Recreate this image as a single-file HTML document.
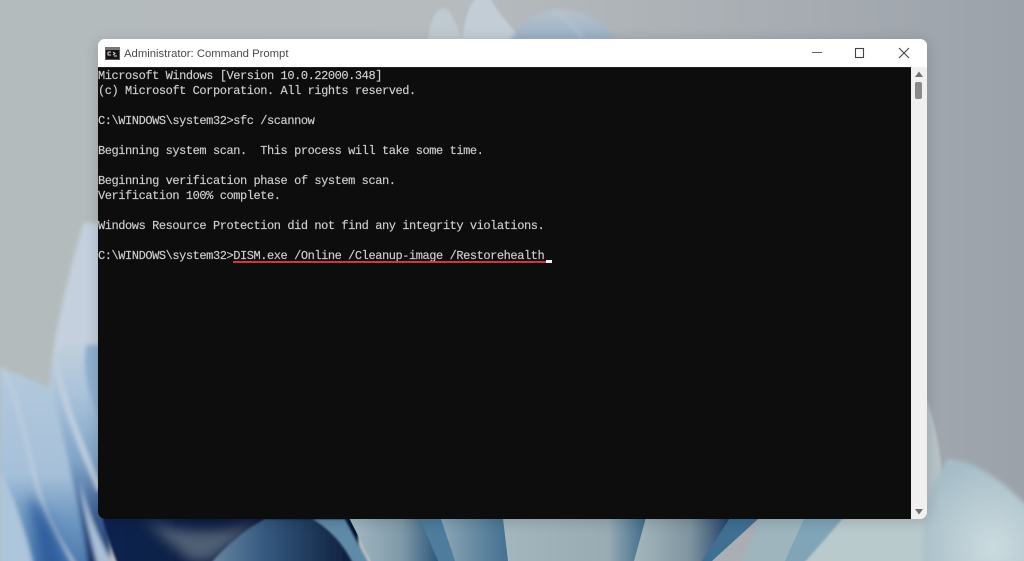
<!DOCTYPE html>
<html lang="en">
<head>
<meta charset="utf-8">
<title>Administrator: Command Prompt</title>
<style>
html,body{margin:0;padding:0;width:1024px;height:561px;overflow:hidden;background:#aeb4b8}
#bg{position:absolute;left:0;top:0}
#win{position:absolute;left:98px;top:39px;width:829px;height:480px;background:#f0f0f0;border-radius:7px;overflow:hidden;box-shadow:0 2px 14px rgba(0,0,0,.16)}
#title{position:absolute;left:0;top:0;width:829px;height:28px;background:#fff}
#ttext{position:absolute;left:26px;top:7.5px;font:11.3px/15px "Liberation Sans",sans-serif;color:#4a4a4a;white-space:nowrap}
#term{position:absolute;left:0;top:28px;width:813px;height:452px;background:#0d0d0d;border-top:1px solid #222;box-sizing:border-box}
#term pre{margin:0;position:absolute;left:0;top:1px;font:12px/15px "Liberation Mono",monospace;letter-spacing:-.44px;color:#cfcfcf;white-space:pre;-webkit-text-stroke:.15px #cfcfcf}
#ul{position:absolute;left:135px;top:193px;width:313px;height:2px;background:#d8323a}
#cur{position:absolute;left:448px;top:192px;width:6px;height:3px;background:#eee}
#sb{position:absolute;left:813px;top:28px;width:16px;height:452px;background:#f0f0f0}
#thumb{position:absolute;left:4px;top:15px;width:7px;height:17px;background:#8a8a8a;border-radius:2px}
</style>
</head>
<body>
<svg id="bg" width="1024" height="561" viewBox="0 0 1024 561" xmlns="http://www.w3.org/2000/svg">
<defs>
<linearGradient id="sky" x1="0" y1="0" x2="1" y2="0"><stop offset="0" stop-color="#b4bbbc"/><stop offset=".45" stop-color="#b6bbbe"/><stop offset="1" stop-color="#9ca2aa"/></linearGradient>
<linearGradient id="lb" x1="0" y1="0" x2="0" y2="1"><stop offset="0" stop-color="#b3c9dc"/><stop offset=".5" stop-color="#a6c0d9"/><stop offset=".7" stop-color="#7099c2"/><stop offset="1" stop-color="#4171aa"/></linearGradient>
<linearGradient id="lb2" gradientUnits="userSpaceOnUse" x1="0" y1="340" x2="0" y2="561"><stop offset="0" stop-color="#c4d0dd"/><stop offset=".25" stop-color="#a9c2da"/><stop offset=".55" stop-color="#7fa3c8"/><stop offset=".8" stop-color="#3a5f94"/><stop offset="1" stop-color="#1c3568"/></linearGradient>
<linearGradient id="d1" x1="0" y1="0" x2="1" y2="0"><stop offset="0" stop-color="#0f2550"/><stop offset="1" stop-color="#06122c"/></linearGradient>
<linearGradient id="st" x1="0" y1="0" x2="1" y2="0"><stop offset="0" stop-color="#6f8ba6"/><stop offset=".4" stop-color="#35597f"/><stop offset="1" stop-color="#0b1b3a"/></linearGradient>
<linearGradient id="b1" x1="0" y1="0" x2="1" y2="0"><stop offset="0" stop-color="#a6bcc6"/><stop offset=".6" stop-color="#7f99a8"/><stop offset="1" stop-color="#2b5478"/></linearGradient>
<linearGradient id="b2" x1="0" y1="0" x2="1" y2="0"><stop offset="0" stop-color="#8fa9b7"/><stop offset="1" stop-color="#426f90"/></linearGradient>
<linearGradient id="b3" x1="0" y1="0" x2="1" y2="0"><stop offset="0" stop-color="#a3b6bd"/><stop offset=".72" stop-color="#98abb3"/><stop offset="1" stop-color="#356488"/></linearGradient>
<linearGradient id="b4" x1="0" y1="0" x2="1" y2="0"><stop offset="0" stop-color="#a5b7bd"/><stop offset=".55" stop-color="#7d939f"/><stop offset="1" stop-color="#0e2f5c"/></linearGradient>
<radialGradient id="tb" cx=".6" cy=".7" r=".7"><stop offset="0" stop-color="#cbdbdf"/><stop offset="1" stop-color="#a6bdc8"/></radialGradient>
<linearGradient id="dome" x1="0" y1="0" x2="0" y2="1"><stop offset="0" stop-color="#b7c3cb"/><stop offset="1" stop-color="#97aec8"/></linearGradient>
<filter id="s1" x="-20%" y="-20%" width="140%" height="140%"><feGaussianBlur stdDeviation="1"/></filter>
<filter id="s2" x="-20%" y="-20%" width="140%" height="140%"><feGaussianBlur stdDeviation="2"/></filter>
<filter id="s6" x="-30%" y="-30%" width="160%" height="160%"><feGaussianBlur stdDeviation="6"/></filter>
</defs>
<rect width="1024" height="561" fill="url(#sky)"/>
<path d="M427 42 C430 25 434 8 444 8 C449 8 452 16 456 24 L464 42Z" fill="#bfc9d0" filter="url(#s1)"/>
<path d="M462 42 C464 20 470 0 478 -2 L490 -2 C498 12 512 30 526 42Z" fill="#c2cdd5" filter="url(#s1)"/>
<path d="M510 42 C520 18 545 8 565 10 C590 12 608 28 618 42Z" fill="url(#dome)" filter="url(#s2)"/>
<path d="M584 42 C575 25 565 16 552 11" stroke="#b5c6d2" stroke-width="2" fill="none" filter="url(#s2)"/>

<!-- left petals -->
<g filter="url(#s2)">
<path d="M50 380 C54 330 72 260 84 222 L110 226 L110 400 L50 400Z" fill="#c4d0dd"/>
<path d="M0 368 C20 375 45 385 58 392 C70 430 90 500 115 580 L0 580Z" fill="url(#lb)"/>
<path d="M50 375 C54 355 60 345 66 335 L110 335 L110 580 L90 580 C80 500 62 440 50 375Z" fill="url(#lb2)"/>
<path d="M86 345 C82 370 88 395 100 420 L110 420 L110 345Z" fill="#8fb0d0"/>
<path d="M56 360 C60 390 74 430 100 490" stroke="#bfcedd" stroke-width="6" fill="none"/>
<path d="M2 368 C14 385 22 425 32 465 C40 505 55 535 78 570" stroke="#bfcedd" stroke-width="3" fill="none"/>
<path d="M0 470 C16 500 28 540 38 580 L0 580Z" fill="#aec6dc"/>
<path d="M80 480 C88 515 100 540 118 575 L100 575 C90 535 82 505 80 480Z" fill="#a9bfd6"/>
</g>
<path d="M28 495 C40 505 58 530 68 575 L42 575Z" fill="#2d5d9c" filter="url(#s6)"/>

<!-- under window -->
<path d="M100 505 L358 505 L358 575 L122 575 C112 550 104 530 100 505Z" fill="url(#d1)" filter="url(#s1)"/>
<path d="M142 518 C170 535 240 535 265 518 L210 561 L190 561Z" fill="#4f5f74" filter="url(#s6)"/>
<path d="M205 570 C230 540 250 527 265 519 L312 519 C330 533 345 545 356 570Z" fill="url(#st)" filter="url(#s1)"/>
<path d="M312 519 L345 519 L372 570 L356 570 C345 545 330 530 312 519Z" fill="#5f8aa8" filter="url(#s1)"/>
<path d="M345 510 L418 510 L440 561 L371 561Z" fill="url(#b1)"/>
<path d="M416 510 L440 510 L457 561 L438 561Z" fill="#4d7c9c"/>
<path d="M438 510 L505 510 L510 561 L455 561Z" fill="url(#b2)"/>
<path d="M502 510 L650 510 L635 561 L508 561Z" fill="url(#b3)"/>
<path d="M648 510 L738 510 L703 561 L634 561Z" fill="url(#b4)"/>
<path d="M735 510 L768 510 L712 561 L702 561Z" fill="#3f6f92"/>
<path d="M765 510 L812 510 L785 561 L742 561Z" fill="#9eb5bd"/>
<path d="M808 510 L855 510 L805 561 L785 561Z" fill="#80a5b8"/>
<path d="M850 510 L930 510 L945 580 L790 580Z" fill="#b9cacc" filter="url(#s1)"/>

<!-- right petals -->
<path d="M925 395 C938 430 948 480 938 520 L920 525Z" fill="#b6c3c7" filter="url(#s1)"/>
<path d="M926 585 C918 540 925 490 948 459 C985 462 1010 490 1040 518 L1040 585Z" fill="url(#tb)" filter="url(#s2)"/>
</svg>

<div id="win">
  <div id="title">
    <svg style="position:absolute;left:7px;top:8px" width="15" height="13" viewBox="0 0 15 13">
      <rect width="15" height="13" fill="#5a5a5a"/>
      <rect x="0" y="0" width="15" height="3" fill="#777"/>
      <rect x="1" y="3" width="13" height="9" fill="#151515"/>
      <path d="M3 5H6M3 5V8H6M8 5L10 6.5L8 8M9 9H12" stroke="#ddd" stroke-width="1" fill="none"/>
    </svg>
    <div id="ttext">Administrator: Command Prompt</div>
    <svg style="position:absolute;left:700px;top:0" width="129" height="28" viewBox="0 0 129 28">
      <path d="M14 13.5H24" stroke="#666" stroke-width="1"/>
      <rect x="57.5" y="9.5" width="8" height="9" fill="none" stroke="#444" stroke-width="1.1"/>
      <path d="M101 9L111 19M111 9L101 19" stroke="#444" stroke-width="1.1" fill="none"/>
    </svg>
  </div>
  <div id="term">
<pre>Microsoft Windows [Version 10.0.22000.348]
(c) Microsoft Corporation. All rights reserved.

C:\WINDOWS\system32&gt;sfc /scannow

Beginning system scan.  This process will take some time.

Beginning verification phase of system scan.
Verification 100% complete.

Windows Resource Protection did not find any integrity violations.

C:\WINDOWS\system32&gt;DISM.exe /Online /Cleanup-image /Restorehealth</pre>
    <div id="ul"></div>
    <div id="cur"></div>
  </div>
  <div id="sb">
    <svg style="position:absolute;left:0;top:0" width="16" height="14" viewBox="0 0 16 14"><path d="M4 10L8 4.5L12 10Z" fill="#707070"/></svg>
    <div id="thumb"></div>
    <svg style="position:absolute;left:0;bottom:0" width="16" height="14" viewBox="0 0 16 14"><path d="M4 4L8 9.5L12 4Z" fill="#707070"/></svg>
  </div>
</div>
</body>
</html>
